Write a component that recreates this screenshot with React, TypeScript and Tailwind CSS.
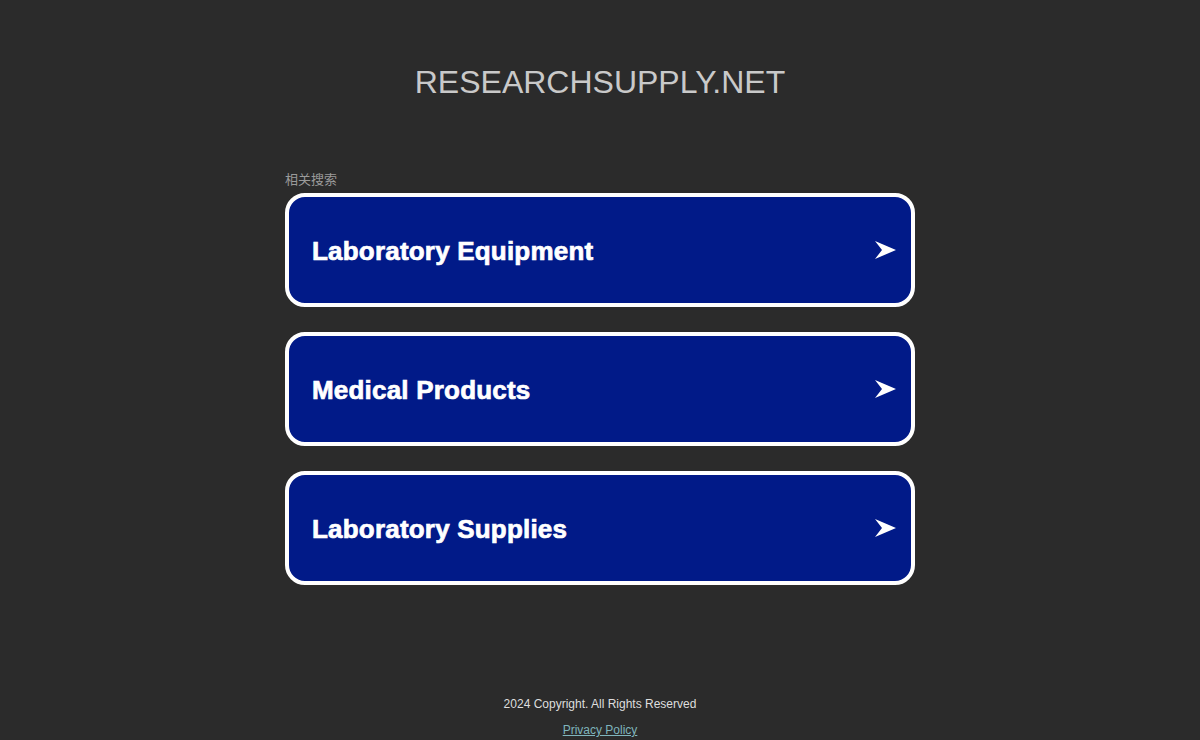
const links = ["Laboratory Equipment", "Medical Products", "Laboratory Supplies"];

function Arrow() {
  return (
    <svg width="21" height="18" viewBox="0 0 21 18" className="shrink-0">
      <polygon points="0,0 21,9 0,18 7,9" fill="#ffffff" />
    </svg>
  );
}

export default function App() {
  return (
    <div
      className="min-h-[740px] bg-[#2b2b2b] flex flex-col items-center"
      style={{ fontFamily: '"Liberation Sans", Arial, "Noto Sans CJK SC", sans-serif' }}
    >
      <h1 className="mt-[64px] text-[32px] leading-[37px] text-[#c9c9c9]">RESEARCHSUPPLY.NET</h1>

      <div className="mt-[71px] w-[630px]">
        <p className="text-[13px] leading-[16px] text-[#9a9a9a] mb-[5px]">相关搜索</p>
        <ul className="flex flex-col gap-[25px]">
          {links.map((label) => (
            <li key={label}>
              <a
                href="#"
                className="flex items-center justify-between h-[114px] rounded-[20px] border-[4px] border-white bg-[#011a88] pl-[23px] pr-[15px]"
              >
                <span className="pt-[1px] text-[26px] leading-[30px] font-bold tracking-[0.2px] text-white [-webkit-text-stroke:0.7px_white]">
                  {label}
                </span>
                <Arrow />
              </a>
            </li>
          ))}
        </ul>
      </div>

      <p className="mt-[112px] text-[12px] leading-[14px] text-[#dedede]">2024 Copyright. All Rights Reserved</p>
      <a href="#" className="mt-[12px] text-[12px] leading-[14px] text-[#7fb5bd] underline">
        Privacy Policy
      </a>
    </div>
  );
}
